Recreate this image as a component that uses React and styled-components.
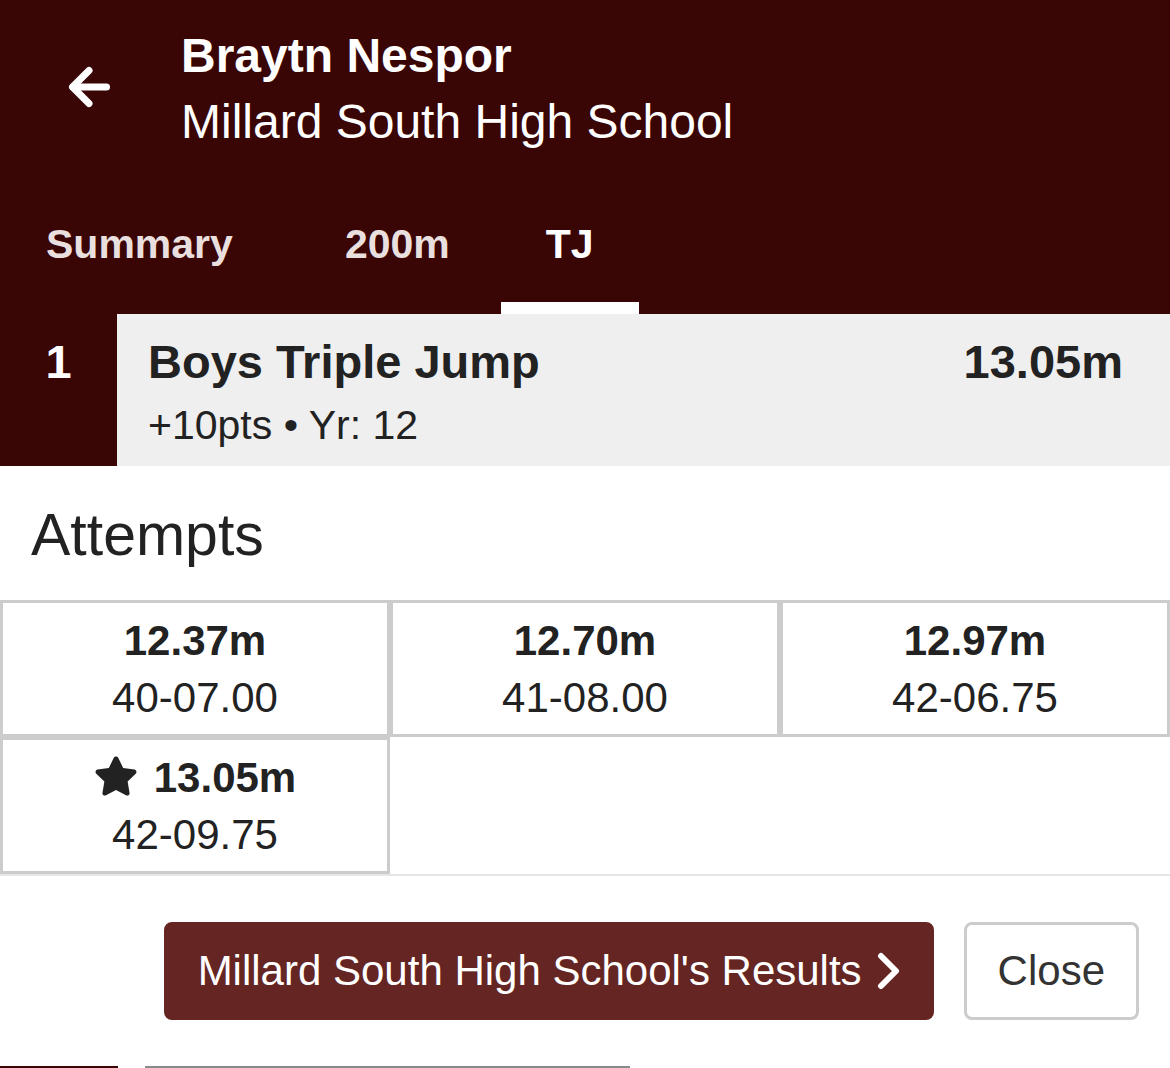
import React from "react";
import styled, { createGlobalStyle } from "styled-components";
import { FaStar } from "react-icons/fa";

const colors = {
  maroon: "#3a0505",
  button: "#652523",
  rowBg: "#efefef",
  text: "#222",
  border: "#cccccc",
  tabIdle: "#e9dfdf"
};

const GlobalStyle = createGlobalStyle`
  body {
    margin: 0;
    background: #fff;
    font-family: "Liberation Sans", Arial, Helvetica, sans-serif;
    color: ${colors.text};
  }
`;

const Page = styled.div`
  width: 1170px;
  height: 1068px;
  overflow: hidden;
  display: flex;
  flex-direction: column;
  background: #fff;
`;

const Header = styled.header`
  background: ${colors.maroon};
  color: #fff;
`;

const TopBar = styled.div`
  display: flex;
  align-items: center;
  padding: 23px 0 25px 68px;
  gap: 69px;
`;

const BackButton = styled.button`
  display: flex;
  padding: 0;
  border: 0;
  background: none;
  color: #fff;
  cursor: pointer;
  margin-top: -4px;
`;

const Titles = styled.div`
  display: flex;
  flex-direction: column;
`;

const Name = styled.div`
  font-size: 48px;
  font-weight: bold;
  line-height: 66px;
`;

const School = styled.div`
  font-size: 48px;
  line-height: 66px;
`;

const Tabs = styled.nav`
  display: flex;
`;

const Tab = styled.div`
  box-sizing: border-box;
  height: 134px;
  margin-left: ${p => p.offset || 0}px;
  padding: 40px 45px 0;
  font-size: 41px;
  font-weight: bold;
  line-height: 48px;
  color: ${p => (p.active ? "#fff" : colors.tabIdle)};
  border-bottom: 12px solid ${p => (p.active ? "#fff" : "transparent")};
  &:first-child {
    padding-left: 46px;
  }
`;

const ResultRow = styled.div`
  display: flex;
  height: 152px;
`;

const Place = styled.div`
  width: 117px;
  flex-shrink: 0;
  background: ${colors.maroon};
  color: #fff;
  font-size: 47px;
  font-weight: bold;
  line-height: 54px;
  padding-top: 21px;
  box-sizing: border-box;
  text-align: center;
`;

const ResultBody = styled.div`
  flex: 1;
  background: ${colors.rowBg};
  padding: 21px 47px 15px 31px;
`;

const ResultTop = styled.div`
  display: flex;
  justify-content: space-between;
  font-size: 47px;
  font-weight: bold;
  line-height: 54px;
  color: ${colors.text};
`;

const ResultMeta = styled.div`
  margin-top: 10px;
  font-size: 41px;
  line-height: 52px;
  color: ${colors.text};
`;

const SectionTitle = styled.h2`
  margin: 0;
  padding: 35px 31px 31px;
  font-size: 59px;
  font-weight: normal;
  line-height: 68px;
  color: ${colors.text};
`;

const AttemptGrid = styled.div`
  display: grid;
  grid-template-columns: repeat(3, 390px);
`;

const Attempt = styled.div`
  border: 3px solid ${colors.border};
  padding: 9px 0 8px;
  text-align: center;
  font-size: 42px;
  line-height: 57px;
  color: ${colors.text};
`;

const Metric = styled.div`
  display: flex;
  justify-content: center;
  align-items: center;
  gap: 16px;
  font-weight: bold;
  svg {
    margin-top: -3px;
  }
`;

const Footer = styled.footer`
  border-top: 2px solid #e6e6e6;
  display: flex;
  justify-content: flex-end;
  gap: 30px;
  padding: 46px 31px 45px;
`;

const Button = styled.button`
  box-sizing: border-box;
  height: 98px;
  display: flex;
  align-items: center;
  gap: 14px;
  padding: 0 31px;
  border-radius: 8px;
  font-family: inherit;
  font-size: 42px;
  border: 3px solid ${p => (p.primary ? colors.button : colors.border)};
  background: ${p => (p.primary ? colors.button : "#fff")};
  color: ${p => (p.primary ? "#fff" : "#333")};
  cursor: pointer;
`;

const BottomEdge = styled.div`
  margin-top: auto;
  height: 2px;
  display: flex;
`;

const EdgePart = styled.div`
  width: ${p => p.w}px;
  background: ${p => p.c};
`;

const attempts = [
  { metric: "12.37m", imperial: "40-07.00" },
  { metric: "12.70m", imperial: "41-08.00" },
  { metric: "12.97m", imperial: "42-06.75" },
  { metric: "13.05m", imperial: "42-09.75", best: true }
];

const BackArrow = () => (
  <svg width="44" height="44" viewBox="0 0 44 44" fill="none" stroke="currentColor" strokeWidth="7" strokeLinecap="round" strokeLinejoin="round">
    <path d="M38.5 22H5" />
    <path d="M21 5.5 4.5 22 21 38.5" />
  </svg>
);

const Chevron = () => (
  <svg width="24" height="38" viewBox="0 0 24 38" fill="none" stroke="currentColor" strokeWidth="6" strokeLinecap="round" strokeLinejoin="round">
    <path d="M5 4l15 15L5 34" />
  </svg>
);

export default function App() {
  return (
    <Page>
      <GlobalStyle />
      <Header>
        <TopBar>
          <BackButton aria-label="Back">
            <BackArrow />
          </BackButton>
          <Titles>
            <Name>Braytn Nespor</Name>
            <School>Millard South High School</School>
          </Titles>
        </TopBar>
        <Tabs>
          <Tab>Summary</Tab>
          <Tab offset={22}>200m</Tab>
          <Tab offset={6} active>TJ</Tab>
        </Tabs>
      </Header>

      <ResultRow>
        <Place>1</Place>
        <ResultBody>
          <ResultTop>
            <span>Boys Triple Jump</span>
            <span>13.05m</span>
          </ResultTop>
          <ResultMeta>+10pts • Yr: 12</ResultMeta>
        </ResultBody>
      </ResultRow>

      <SectionTitle>Attempts</SectionTitle>
      <AttemptGrid>
        {attempts.map(a => (
          <Attempt key={a.metric}>
            <Metric>
              {a.best && <FaStar size={44} />}
              <span>{a.metric}</span>
            </Metric>
            <div>{a.imperial}</div>
          </Attempt>
        ))}
      </AttemptGrid>

      <Footer>
        <Button primary>
          Millard South High School's Results
          <Chevron />
        </Button>
        <Button>Close</Button>
      </Footer>

      <BottomEdge>
        <EdgePart w={118} c={colors.maroon} />
        <EdgePart w={27} c="#fff" />
        <EdgePart w={485} c="#8a8a8a" />
      </BottomEdge>
    </Page>
  );
}
